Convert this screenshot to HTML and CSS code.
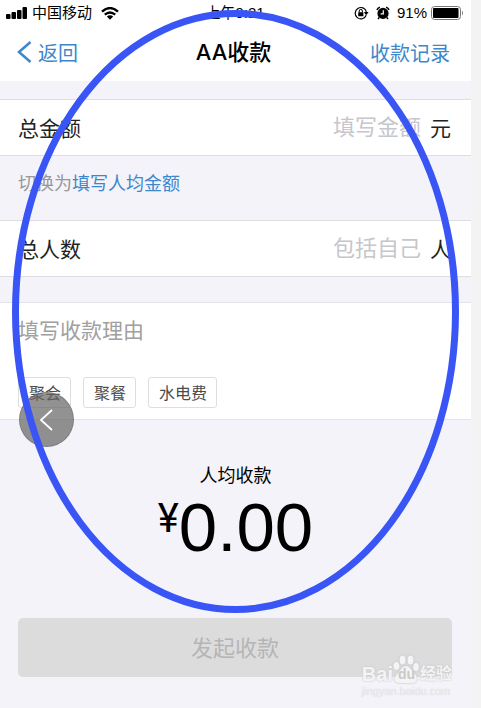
FILE: index.html
```html
<!DOCTYPE html>
<html lang="zh-CN">
<head>
<meta charset="utf-8">
<meta name="viewport" content="width=device-width, initial-scale=1">
<title>AA收款</title>
<link rel="stylesheet" href="styles.css">
</head>
<body>
<div class="screen">
  <header class="top">
    <div class="status">
      <div class="status-side">
        <svg class="signal" viewBox="0 0 22 12" width="22" height="12" aria-hidden="true"><rect x="0" y="7" width="4.500" height="5" rx="1"/><rect x="5.500" y="5" width="4.500" height="7" rx="1"/><rect x="11" y="3" width="4.500" height="9" rx="1"/><rect x="16.500" y="0" width="4.500" height="12" rx="1"/></svg>
        <span class="carrier">中国移动</span>
        <svg class="wifi" viewBox="0 0 18 13" width="18" height="13" aria-hidden="true"><path d="M1 4.600Q9-2.400 17 4.600M3.800 7.600Q9 3.200 14.200 7.600" fill="none" stroke="#000" stroke-width="2.400"/><path d="M5.800 9.400Q9 7 12.200 9.400L9 12.800z"/></svg>
      </div>
      <span class="clock">上午9:21</span>
      <div class="status-side status-right">
        <svg viewBox="0 0 15 14" width="15" height="14" aria-hidden="true"><path d="M12.200 9.300A5.700 5.700 0 1 1 12.400 5.800" fill="none" stroke="#000" stroke-width="1.200"/><path d="M9.800 6h4.800l-2.400 3.200z"/><rect x="4.200" y="6.200" width="5.200" height="4" rx=".5"/><path d="M5.200 6.500V5a1.600 1.600 0 0 1 3.200 0v1.500" fill="none" stroke="#000"/></svg>
        <svg viewBox="0 0 14 14" width="14" height="14" aria-hidden="true"><circle cx="7" cy="7.400" r="5.600"/><path d="M1 4Q1.500 1.800 4 1.200M13 4Q12.500 1.800 10 1.200M3.200 11.500 2 13M10.800 11.500 12 13" fill="none" stroke="#000" stroke-width="1.500"/><path d="M7.300 4.300V7.800H4.600" fill="none" stroke="#fff" stroke-width="1.200"/></svg>
        <span class="percent">91%</span>
        <svg viewBox="0 0 33 14" width="33" height="14" aria-hidden="true"><rect x=".5" y=".5" width="29" height="13" rx="3" fill="#fff" stroke="#777"/><rect x="2" y="2" width="25.500" height="10" rx="1"/><path d="M31 4.500q2 2.500 0 5z" fill="#777"/></svg>
      </div>
    </div>
    <nav class="nav">
      <a class="back" href="#"><svg viewBox="0 0 15 22" width="15" height="22" aria-hidden="true"><path d="M13.500 1 2 11l11.500 10" fill="none" stroke="currentColor" stroke-width="2.500"/></svg>返回</a>
      <h1>AA收款</h1>
      <a class="records" href="#">收款记录</a>
    </nav>
  </header>

  <main>
    <div class="row">
      <label for="amount">总金额</label>
      <input id="amount" type="text" placeholder="填写金额">
      <span class="unit">元</span>
    </div>
    <p class="hint">切换为<a href="#">填写人均金额</a></p>
    <div class="row">
      <label for="people">总人数</label>
      <input id="people" type="text" placeholder="包括自己">
      <span class="unit">人</span>
    </div>
    <section class="reason">
      <input class="reason-input" type="text" placeholder="填写收款理由" aria-label="填写收款理由">
      <div class="tags">
        <button type="button">聚会</button>
        <button type="button">聚餐</button>
        <button type="button">水电费</button>
      </div>
      <button class="floating" type="button" aria-label="返回"><svg viewBox="0 0 16 22" width="16" height="22" aria-hidden="true"><path d="M13 1 2 11l11 10" fill="none" stroke="#fff" stroke-width="1.800"/></svg></button>
    </section>
    <section class="total">
      <h2>人均收款</h2>
      <p class="sum"><span class="yen">¥</span>0.00</p>
    </section>
    <button class="submit" type="button" disabled>发起收款</button>
  </main>

  <svg class="ring" viewBox="0 0 447 603" preserveAspectRatio="none" aria-hidden="true"><ellipse cx="223.500" cy="301.500" rx="220" ry="298" fill="none" stroke="#3a55f5" stroke-width="7"/></svg>

  <div class="watermark">
    <div class="brand">
      <span>Bai</span>
      <span class="paw"><svg viewBox="0 0 26 30" width="26" height="30" aria-hidden="true"><ellipse cx="3.500" cy="12" rx="3" ry="4"/><ellipse cx="9.500" cy="6" rx="3" ry="4.500"/><ellipse cx="17.500" cy="6" rx="3" ry="4.500"/><ellipse cx="23" cy="13" rx="2.800" ry="4"/><path d="M13 12c4 0 5 4 8 7 5 5 3 10-2 10H7c-6 0-7-5-2-10 3-3 4-7 8-7z"/></svg><b>du</b></span>
      <span class="brand-cn">经验</span>
    </div>
    <div class="site">jingyan.baidu.com</div>
  </div>
</div>
</body>
</html>
```
FILE: styles.css
```css
* {
  box-sizing: border-box;
}

body {
  margin: 0;
  padding-right: 10px;
  background: #f3f3f3;
  color: #222;
  font-family: "Liberation Sans", "Noto Sans CJK SC", sans-serif;
}

a {
  color: #3d87cc;
  text-decoration: none;
}

h1,
h2,
p {
  margin: 0;
  font-weight: 400;
}

button,
input {
  font-family: inherit;
}

.screen {
  position: relative;
  min-height: 100vh;
  background: #f4f3f9;
}

.top {
  background: #fff;
  color: #000;
}

.status {
  display: grid;
  grid-template-columns: 1fr auto 1fr;
  align-items: center;
  height: 26px;
  padding: 0 7px 0 6px;
  font-size: 15px;
  line-height: 26px;
}

.status-side {
  display: flex;
  align-items: center;
  gap: 4px;
}

.wifi {
  margin-left: 5px;
}

.status-right {
  justify-content: flex-end;
  gap: 7px;
}

.percent {
  margin-right: -3px;
}

.nav {
  display: grid;
  grid-template-columns: 1fr auto 1fr;
  align-items: center;
  height: 55px;
  padding: 0 21px 3px 17px;
  font-size: 20px;
}

.back {
  display: flex;
  align-items: center;
  gap: 6px;
}

.nav h1 {
  font-family: Inter, "Noto Sans CJK SC", sans-serif;
  font-size: 22px;
  font-weight: 500;
  line-height: 28px;
}

.records {
  justify-self: end;
}

.row {
  display: flex;
  align-items: center;
  height: 57px;
  padding: 0 20px 2px 18px;
  border: solid #dedee2;
  border-width: 1px 0;
  background: #fff;
  font-size: 21px;
}

.top + main > .row:first-child {
  margin-top: 18px;
}

.row input {
  flex: 1;
  min-width: 0;
  height: 40px;
  padding: 2px 9px 0 0;
  border: 0;
  background: none;
  font-size: 22px;
  text-align: right;
}

::placeholder {
  color: #c6c6cc;
  opacity: 1;
}

.hint {
  height: 64px;
  padding: 15px 18px;
  color: #97979b;
  font-size: 18px;
  line-height: 26px;
}

.reason {
  position: relative;
  height: 118px;
  margin-top: 25px;
  padding: 12px 18px;
  border: solid #e4e4e8;
  border-width: 1px 0;
  background: #fff;
}

.reason-input {
  display: block;
  width: 100%;
  height: 32px;
  padding: 0;
  border: 0;
  background: none;
  font-size: 21px;
}

.reason-input::placeholder {
  color: #a0a0a0;
}

.tags {
  display: flex;
  gap: 12px;
  margin-top: 30px;
}

.tags button {
  height: 31px;
  padding: 0 9px 2px 10px;
  border: 1px solid #dedede;
  border-radius: 3px;
  background: #fff;
  color: #4c4c4c;
  font-size: 16px;
}

.floating {
  position: absolute;
  top: 89px;
  left: 19px;
  display: flex;
  align-items: center;
  justify-content: center;
  width: 55px;
  height: 55px;
  padding: 0;
  border: 1px solid rgba(110, 110, 110, 0.5);
  border-radius: 50%;
  background: rgba(100, 100, 100, 0.7);
}

.total {
  padding-top: 43px;
  color: #000;
  text-align: center;
}

.total h2 {
  font-size: 18px;
  line-height: 26px;
}

.sum {
  display: flex;
  justify-content: center;
  font-size: 69px;
  line-height: 78px;
}

.yen {
  font-family: Roboto, sans-serif;
  font-size: 40px;
  line-height: 60px;
}

.submit {
  display: block;
  width: calc(100% - 37px);
  height: 59px;
  margin: 51px 19px 0 18px;
  padding: 0 0 4px;
  border: 0;
  border-radius: 5px;
  background: #dcdcdc;
  color: #b5b5b5;
  font-size: 22px;
}

.ring {
  position: absolute;
  top: 10px;
  left: 12px;
  width: calc(100% - 24px);
  height: 603px;
  pointer-events: none;
}

.watermark {
  position: absolute;
  right: 19px;
  bottom: 10px;
  color: #f4f4f6;
  text-shadow: 0 0 2px #bbb;
  pointer-events: none;
}

.brand {
  display: flex;
  align-items: flex-end;
  font-size: 20px;
  font-weight: 700;
  line-height: 20px;
}

.paw {
  position: relative;
  display: flex;
}

.paw svg {
  fill: #f4f4f6;
  filter: drop-shadow(0 0 1px #bbb);
}

.paw b {
  position: absolute;
  bottom: 0;
  left: 5px;
  color: #c9c9c9;
  font-size: 14px;
  text-shadow: none;
}

.brand-cn {
  margin-left: 1px;
  font-size: 16px;
}

.site {
  color: #ededf1;
  font-size: 11px;
  line-height: 14px;
  text-shadow: 0 0 1px #ccc;
}
```
